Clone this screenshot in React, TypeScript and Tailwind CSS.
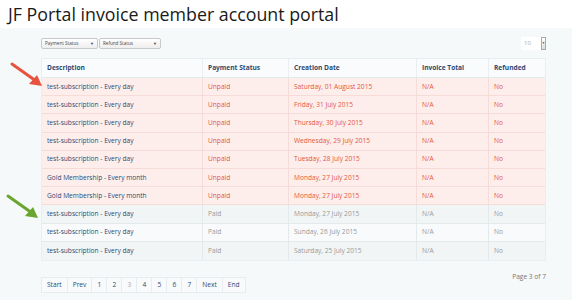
import React from "react";

type Row = { d: string; s: string; date: string; paid: boolean };

const rows: Row[] = [
  { d: "test-subscription - Every day", s: "Unpaid", date: "Saturday, 01 August 2015", paid: false },
  { d: "test-subscription - Every day", s: "Unpaid", date: "Friday, 31 July 2015", paid: false },
  { d: "test-subscription - Every day", s: "Unpaid", date: "Thursday, 30 July 2015", paid: false },
  { d: "test-subscription - Every day", s: "Unpaid", date: "Wednesday, 29 July 2015", paid: false },
  { d: "test-subscription - Every day", s: "Unpaid", date: "Tuesday, 28 July 2015", paid: false },
  { d: "Gold Membership - Every month", s: "Unpaid", date: "Monday, 27 July 2015", paid: false },
  { d: "Gold Membership - Every month", s: "Unpaid", date: "Monday, 27 July 2015", paid: false },
  { d: "test-subscription - Every day", s: "Paid", date: "Monday, 27 July 2015", paid: true },
  { d: "test-subscription - Every day", s: "Paid", date: "Sunday, 26 July 2015", paid: true },
  { d: "test-subscription - Every day", s: "Paid", date: "Saturday, 25 July 2015", paid: true },
];

const pages = ["Start", "Prev", "1", "2", "3", "4", "5", "6", "7", "Next", "End"];

function Arrow({ color, className }: { color: string; className: string }) {
  return (
    <svg className={className} width="34" height="26" viewBox="0 0 34 26">
      <line x1="2" y1="2" x2="26" y2="19" stroke={color} strokeWidth="3" strokeLinecap="round" />
      <polygon points="32,24 19,22 27,13" fill={color} />
    </svg>
  );
}

export default function App() {
  return (
    <div className="w-[572px] h-[300px] bg-[#f6f9fa] overflow-hidden relative" style={{ fontFamily: "'Open Sans', sans-serif" }}>
      <div className="h-[28px] bg-white pl-[8px] pt-[2px]">
        <div className="text-[17.8px] leading-[24px] text-[#1a1a1a]" style={{ fontFamily: "'Open Sans', sans-serif" }}>
          JF Portal invoice member account portal
        </div>
      </div>
      <div className="pl-[41px] pr-[26px] pt-[9px] w-[572px] relative">
        <div className="flex items-center justify-between h-[13px]">
          <div className="flex gap-[1px]">
            <div className="w-[57px] h-[11px] border border-[#c8c8c8] rounded-[2px] bg-gradient-to-b from-white to-[#eeeeee] flex items-center justify-between px-[3px] text-[4.6px] text-[#444]">
              <span>Payment Status</span>
              <span className="text-[4px]">▼</span>
            </div>
            <div className="w-[62px] h-[11px] border border-[#c8c8c8] rounded-[2px] bg-gradient-to-b from-white to-[#eeeeee] flex items-center justify-between px-[3px] text-[4.6px] text-[#444]">
              <span>Refund Status</span>
              <span className="text-[4px]">▼</span>
            </div>
          </div>
          <div className="flex items-center h-[13px]">
            <div className="w-[20px] h-[13px] bg-white text-[6px] text-[#aaa] flex items-center pl-[3px]">10</div>
            <div className="w-[5px] h-[13px] bg-gradient-to-b from-white to-[#ddd] border border-[#aaa] flex items-center justify-center text-[3px] text-[#333]">▼</div>
          </div>
        </div>
        <div className="mt-[8px] border border-[#e8eef1] w-[505px]">
          <div className="grid grid-cols-[161px_86px_128px_72px_56px] h-[19px] bg-[#f9fbfc] border-b border-[#e3e9ec] text-[6.6px] font-bold text-[#2d4a72]">
            <div className="px-[5px] flex items-center border-r border-[#e8eef1]">Description</div>
            <div className="px-[5px] flex items-center border-r border-[#e8eef1]">Payment Status</div>
            <div className="px-[5px] flex items-center border-r border-[#e8eef1]">Creation Date</div>
            <div className="px-[5px] flex items-center border-r border-[#e8eef1]">Invoice Total</div>
            <div className="px-[5px] flex items-center">Refunded</div>
          </div>
          {rows.map((r, i) => {
            const bg = r.paid ? (i % 2 === 1 ? "bg-[#f1f5f6]" : "bg-[#f8fafb]") : "bg-[#fdeeec]";
            const tc = r.paid ? "text-[#9a9a9a]" : "text-[#e4573d]";
            const bc = r.paid ? "border-[#e4eaec]" : "border-[#f5dcd8]";
            return (
              <div key={i} className={`grid grid-cols-[161px_86px_128px_72px_56px] h-[18.2px] text-[6.6px] ${bg} ${i < rows.length - 1 ? `border-b ${bc}` : ""}`}>
                <div className={`px-[5px] flex items-center text-[#2d4a72] border-r ${bc}`}>{r.d}</div>
                <div className={`px-[5px] flex items-center ${tc} border-r ${bc}`}>{r.s}</div>
                <div className={`px-[5px] flex items-center ${tc} border-r ${bc}`}>{r.date}</div>
                <div className={`px-[5px] flex items-center ${tc} border-r ${bc}`}>N/A</div>
                <div className={`px-[5px] flex items-center ${tc}`}>No</div>
              </div>
            );
          })}
        </div>
        <div className="flex justify-between items-start mt-[10px]">
          <div className="flex border border-[#e6ecef] bg-[#f8fafb] h-[16px] text-[6.6px] mt-[6px]">
            {pages.map((p, i) => (
              <div
                key={p}
                className={`flex items-center justify-center ${p.length > 1 ? "px-[5px]" : "w-[15px]"} ${i > 0 ? "border-l border-[#e6ecef]" : ""} ${p === "3" ? "text-[#aaa]" : "text-[#2d4a72]"}`}
              >
                {p}
              </div>
            ))}
          </div>
          <div className="text-[6.6px] text-[#777] pt-[1px]">Page 3 of 7</div>
        </div>
      </div>
      <Arrow color="#e8533f" className="absolute left-[10px] top-[62px]" />
      <Arrow color="#6aa530" className="absolute left-[6px] top-[194px]" />
    </div>
  );
}
